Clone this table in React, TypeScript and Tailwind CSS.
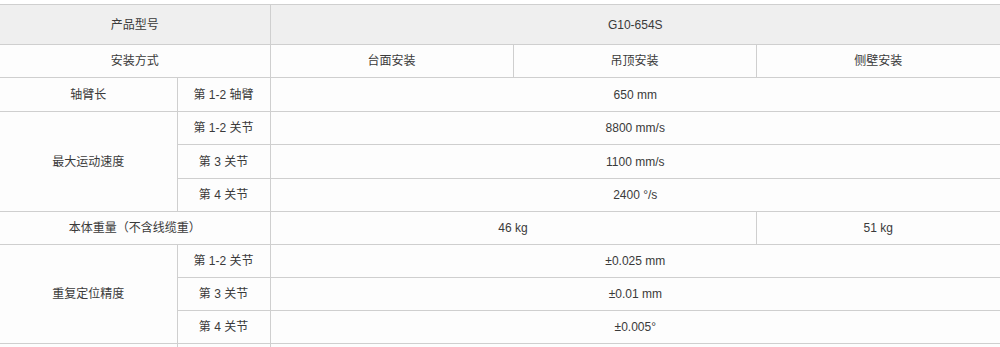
const cell = 'border border-[#cfcfcf] text-center align-middle';

export default function App() {
  return (
    <div className="w-[1000px] h-[347px] bg-white pt-[4px] overflow-hidden" style={{ fontFamily: '"Liberation Sans", Arial, "Noto Sans CJK SC", sans-serif' }}>
      <table className="w-[1000px] border-collapse table-fixed text-[12px] text-[#3a3a3a] [&_td:first-child]:border-l-0 [&_td:last-child]:border-r-0 bg-[#fdfdfd]">
        <colgroup>
          <col className="w-[177px]" />
          <col className="w-[93px]" />
          <col className="w-[243px]" />
          <col className="w-[243px]" />
          <col className="w-[244px]" />
        </colgroup>
        <tbody>
          <tr className="h-[40px] bg-[#efefef]">
            <td className={cell} colSpan={2}>产品型号</td>
            <td className={cell} colSpan={3}>G10-654S</td>
          </tr>
          <tr className="h-[33px]">
            <td className={cell} colSpan={2}>安装方式</td>
            <td className={cell}>台面安装</td>
            <td className={cell}>吊顶安装</td>
            <td className={cell}>侧壁安装</td>
          </tr>
          <tr className="h-[34px]">
            <td className={cell}>轴臂长</td>
            <td className={cell}>第 1-2 轴臂</td>
            <td className={cell} colSpan={3}>650 mm</td>
          </tr>
          <tr className="h-[33px]">
            <td className={cell} rowSpan={3}>最大运动速度</td>
            <td className={cell}>第 1-2 关节</td>
            <td className={cell} colSpan={3}>8800 mm/s</td>
          </tr>
          <tr className="h-[34px]">
            <td className={cell}>第 3 关节</td>
            <td className={cell} colSpan={3}>1100 mm/s</td>
          </tr>
          <tr className="h-[33px]">
            <td className={cell}>第 4 关节</td>
            <td className={cell} colSpan={3}>2400 °/s</td>
          </tr>
          <tr className="h-[33px]">
            <td className={cell} colSpan={2}>本体重量（不含线缆重）</td>
            <td className={cell} colSpan={2}>46 kg</td>
            <td className={cell}>51 kg</td>
          </tr>
          <tr className="h-[33px]">
            <td className={cell} rowSpan={3}>重复定位精度</td>
            <td className={cell}>第 1-2 关节</td>
            <td className={cell} colSpan={3}>±0.025 mm</td>
          </tr>
          <tr className="h-[33px]">
            <td className={cell}>第 3 关节</td>
            <td className={cell} colSpan={3}>±0.01 mm</td>
          </tr>
          <tr className="h-[33px]">
            <td className={cell}>第 4 关节</td>
            <td className={cell} colSpan={3}>±0.005°</td>
          </tr>
          <tr className="h-[33px]">
            <td className={cell}></td>
            <td className={cell}></td>
            <td className={cell} colSpan={3}></td>
          </tr>
        </tbody>
      </table>
    </div>
  );
}
